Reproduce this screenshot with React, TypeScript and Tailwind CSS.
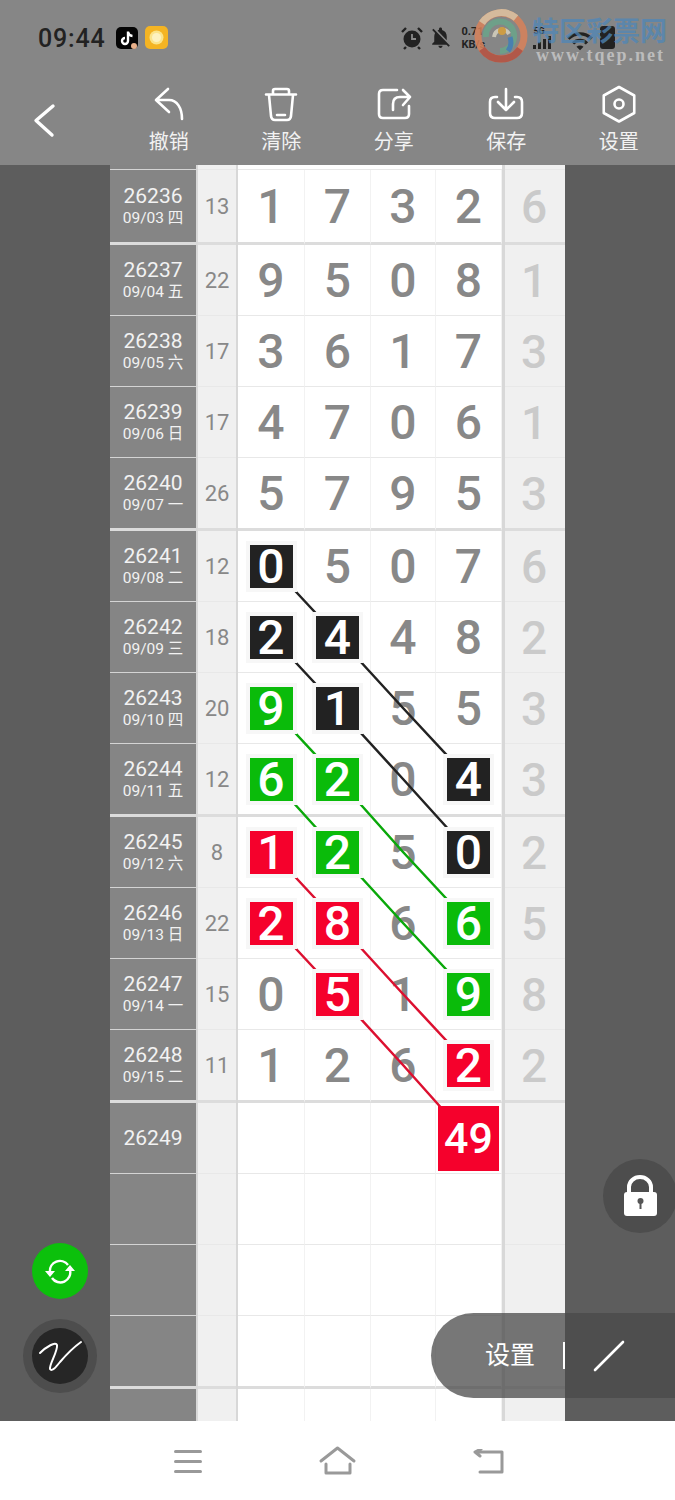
import { MdNotificationsOff, MdWifi } from "react-icons/md";

type Row = { no: string; date: string; sum: string; nums: string; last: string; marks: string; end?: boolean; tall?: boolean };

const rows: Row[] = [
  { no: "26236", date: "09/03 四", sum: "13", nums: "1732", last: "6", marks: "....", end: true, tall: true },
  { no: "26237", date: "09/04 五", sum: "22", nums: "9508", last: "1", marks: "...." },
  { no: "26238", date: "09/05 六", sum: "17", nums: "3617", last: "3", marks: "...." },
  { no: "26239", date: "09/06 日", sum: "17", nums: "4706", last: "1", marks: "...." },
  { no: "26240", date: "09/07 一", sum: "26", nums: "5795", last: "3", marks: "....", end: true },
  { no: "26241", date: "09/08 二", sum: "12", nums: "0507", last: "6", marks: "k..." },
  { no: "26242", date: "09/09 三", sum: "18", nums: "2448", last: "2", marks: "kk.." },
  { no: "26243", date: "09/10 四", sum: "20", nums: "9155", last: "3", marks: "gk.." },
  { no: "26244", date: "09/11 五", sum: "12", nums: "6204", last: "3", marks: "gg.k", end: true },
  { no: "26245", date: "09/12 六", sum: "8", nums: "1250", last: "2", marks: "rg.k" },
  { no: "26246", date: "09/13 日", sum: "22", nums: "2866", last: "5", marks: "rr.g" },
  { no: "26247", date: "09/14 一", sum: "15", nums: "0519", last: "8", marks: ".r.g" },
  { no: "26248", date: "09/15 二", sum: "11", nums: "1262", last: "2", marks: "...r", end: true },
];

const cellWidths = ["w-[67px]", "w-[66px]", "w-[65px]", "w-[66px]"];
const boxColors: Record<string, string> = {
  k: "bg-[#222222]",
  g: "bg-[#0abb0a]",
  r: "bg-[#f5012c]",
};

function rowBorder(end?: boolean) {
  return end ? "border-b-[3px] border-[#dcdcdc]" : "border-b border-[#e8e8e8]";
}

function rowHeight(end?: boolean, tall?: boolean) {
  if (tall) return "h-[75px]";
  return end ? "h-[73px]" : "h-[71px]";
}

function TableRow({ row }: { row: Row }) {
  const leftBorder = row.end ? "border-b-[3px] border-[#dcdcdc]" : "border-b border-[#d4d4d4]";
  return (
    <div className={`flex bg-[#d8d8d8] ${rowHeight(row.end, row.tall)}`}>
      <div className={`w-[86px] pt-[1px] bg-[#858585] text-[#f2f2f2] flex flex-col items-center justify-center ${leftBorder}`}>
        <div className="text-[21px] leading-[24px]">{row.no}</div>
        <div className="text-[15.5px] leading-[21px]">{row.date}</div>
      </div>
      <div className={`ml-[2px] w-[38px] bg-[#f0f0f0] text-[#888888] text-[22px] flex items-center justify-center ${rowBorder(row.end)}`}>
        {row.sum}
      </div>
      <div className="ml-[2px] flex">
        {row.nums.split("").map((d, i) => {
          const mark = row.marks[i];
          return (
            <div key={i} className={`${cellWidths[i]} bg-white border-r border-r-[#f2f2f2] flex items-center justify-center text-[48px] font-medium text-[#888888] ${mark === "." ? "pt-[2px]" : ""} ${rowBorder(row.end)}`}>
              {mark !== "." ? (
                <div className={`relative z-[2] size-[43px] pt-[2px] flex items-center justify-center text-white outline-[4px] outline-[#f7f7f7] ${boxColors[mark]}`}>
                  {d}
                </div>
              ) : (
                d
              )}
            </div>
          );
        })}
      </div>
      <div className={`ml-[3px] w-[60px] pr-[2px] pt-[2px] bg-[#f0f0f0] text-[#cacaca] text-[46px] font-medium flex items-center justify-center ${rowBorder(row.end)}`}>
        {row.last}
      </div>
    </div>
  );
}

function BlankRow({ no, end, children }: { no?: string; end?: boolean; children?: React.ReactNode }) {
  const leftBorder = end ? "border-b-[3px] border-[#dcdcdc]" : "border-b border-[#d4d4d4]";
  return (
    <div className={`flex bg-[#d8d8d8] ${rowHeight(end)}`}>
      <div className={`w-[86px] pt-[2px] bg-[#858585] text-[#f2f2f2] text-[21px] flex items-center justify-center ${leftBorder}`}>{no}</div>
      <div className={`ml-[2px] w-[38px] bg-[#f0f0f0] ${rowBorder(end)}`} />
      <div className="ml-[2px] flex">
        {cellWidths.map((w, i) => (
          <div key={i} className={`${w} bg-white border-r border-r-[#f2f2f2] flex items-center justify-center ${rowBorder(end)}`}>
            {i === 3 ? children : null}
          </div>
        ))}
      </div>
      <div className={`ml-[3px] w-[60px] bg-[#f0f0f0] ${rowBorder(end)}`} />
    </div>
  );
}

function ToolItem({ label, children }: { label: string; children: React.ReactNode }) {
  return (
    <div className="flex-1 flex flex-col items-center">
      {children}
      <div className="text-[20px] leading-[28px] text-[#f2f2f2] mt-[5px]">{label}</div>
    </div>
  );
}

const icon = { fill: "none", stroke: "#ffffff", strokeWidth: 2.6, strokeLinecap: "round" as const, strokeLinejoin: "round" as const };

function Header() {
  return (
    <header className="relative h-[165px] shrink-0 bg-[#868686]">
      {/* status bar */}
      <div className="h-[75px] flex items-center">
        <span className="ml-[38px] mt-[2px] text-[25px] font-medium text-[#222222] tracking-[0.8px]">09:44</span>
        <svg className="ml-[11px]" width="22" height="22" viewBox="0 0 22 22">
          <rect width="22" height="22" rx="5" fill="#050505" />
          <path d="M12 4.500v9.500a3 3 0 1 1-3-3M12 5c.5 2.500 2 3.800 4.500 4" fill="none" stroke="#ffffff" strokeWidth="2.400" />
          <circle cx="18" cy="19" r="3" fill="#e8b08a" />
        </svg>
        <svg className="ml-[7px]" width="23" height="23" viewBox="0 0 23 23">
          <rect width="23" height="23" rx="5" fill="#f4b423" />
          <circle cx="11.500" cy="11.500" r="7" fill="#fbe48a" />
          <circle cx="11.500" cy="11.500" r="4.500" fill="#fdf2c0" />
        </svg>
        <svg className="ml-[232px]" width="24" height="24" viewBox="0 0 24 24">
          <circle cx="12" cy="13" r="8.500" fill="#222222" />
          <path d="M12 8v5h4" fill="none" stroke="#8a8a8a" strokeWidth="1.800" />
          <path d="M2 6l4-4M22 6l-4-4M6 21l-2 2M18 21l2 2" stroke="#222222" strokeWidth="2.400" />
        </svg>
        <MdNotificationsOff className="ml-[4px] text-[#222222]" size={25} />
        <div className="ml-[8px] w-[27px] text-[11px] leading-[13px] font-bold text-[#222222]">
          0.71
          <br />
          KB/s
        </div>
        <div className="ml-[45px] w-[24px] flex flex-col">
          <span className="text-[9px] leading-[9px] font-bold text-[#222222]">5G</span>
          <div className="flex items-end gap-[2px] h-[13px]">
            <div className="w-[3px] h-[4px] bg-[#222222]" />
            <div className="w-[3px] h-[7px] bg-[#222222]" />
            <div className="w-[3px] h-[10px] bg-[#222222]" />
            <div className="w-[3px] h-[13px] bg-[#222222]" />
          </div>
        </div>
        <MdWifi className="ml-[9px] text-[#222222] mt-[6px]" size={28} />
        <div className="ml-[6px] w-[15px] h-[23px] rounded-[3px] bg-[#222222]" />
      </div>

      {/* watermark over the status bar */}
      <svg className="absolute left-[474px] top-[9px] opacity-85" width="54" height="54" viewBox="0 0 54 54">
        <circle cx="27" cy="27" r="23" fill="none" stroke="#d9825a" strokeWidth="7" />
        <path d="M8 14A23 23 0 0 1 42 9" fill="none" stroke="#e3c4a0" strokeWidth="7" />
        <path d="M8 40A23 23 0 0 0 46 40" fill="none" stroke="#b9503f" strokeWidth="7" />
        <path d="M12 28a14 14 0 0 1 28-3c1 9-6 17-14 17" fill="none" stroke="#6aa58a" strokeWidth="6" />
        <path d="M20 28a8 8 0 0 1 15-3" fill="none" stroke="#d7d2c0" strokeWidth="4" />
        <path d="M36 28c2 6 1 10-2 14" fill="none" stroke="#3f7fb8" strokeWidth="5" />
        <circle cx="28" cy="22" r="4" fill="#d9a13a" />
      </svg>
      <div className="absolute left-[532px] top-[14px] text-[27px] leading-[36px] text-[#4f86b8] opacity-75 font-bold">特区彩票网</div>
      <div className="absolute left-[536px] top-[45px] font-['Liberation_Serif',serif] text-[18px] leading-[20px] tracking-[2px] font-bold text-[#bcbcbc]">www.tqep.net</div>

      {/* toolbar */}
      <div className="h-[90px] flex pt-[10px]">
        <div className="w-[112.5px]">
          <svg className="ml-[32px] mt-[17px]" width="26" height="36" viewBox="32 102 26 36">
            <path d="M53 106L36 120.500L52 135" {...icon} strokeWidth={3.4} />
          </svg>
        </div>
        <ToolItem label="撤销">
          <svg width="36" height="38" viewBox="150 85 36 38">
            <path d="M167 89L155 100L168 112M156 100H168C176 100 181 108 181 119" {...icon} />
          </svg>
        </ToolItem>
        <ToolItem label="清除">
          <svg width="36" height="38" viewBox="263 85 36 38">
            <path d="M266 94.500H296M273 94V91Q273 89 275 89H287Q289 89 289 91V94M269 95L271 116Q271.500 120 275 120H287Q290.500 120 291 116L293 95M277 115H285" {...icon} />
          </svg>
        </ToolItem>
        <ToolItem label="分享">
          <svg width="36" height="38" viewBox="376 85 36 38">
            <path d="M397 90H383Q379 90 379 94V114Q379 118 383 118H405Q409 118 409 114V106M393 110V104Q393 97 400 97H410M403 90L410 97L403 105" {...icon} />
          </svg>
        </ToolItem>
        <ToolItem label="保存">
          <svg width="36" height="38" viewBox="488 85 36 38">
            <path d="M497 97H495Q490 97 490 102V113Q490 118 495 118H517Q522 118 522 113V102Q522 97 517 97H515M506 89V110M498 102L506 110L514 102" {...icon} />
          </svg>
        </ToolItem>
        <ToolItem label="设置">
          <svg width="36" height="38" viewBox="600.250 85 36 38">
            <path d="M618.250 87L633.500 95.500V113L618.250 121.500L603 113V95.500Z" {...icon} />
            <circle cx="618.250" cy="104" r="4.500" {...icon} />
          </svg>
        </ToolItem>
      </div>
    </header>
  );
}

function Table() {
  return (
    <div className="relative w-[455px] overflow-hidden">
      <div className="flex bg-[#d8d8d8] h-[5px]">
        <div className="w-[86px] bg-[#858585] border-b border-[#d4d4d4]" />
        <div className="ml-[2px] w-[38px] bg-[#f0f0f0] border-b border-[#e8e8e8]" />
        <div className="ml-[2px] w-[264px] bg-white border-b border-[#e8e8e8]" />
        <div className="ml-[3px] w-[60px] bg-[#f0f0f0] border-b border-[#e8e8e8]" />
      </div>
      {rows.map((r) => (
        <TableRow key={r.no} row={r} />
      ))}
      <BlankRow no="26249">
        <div className="relative z-[2] w-[61px] h-[65px] bg-[#f5012c] text-white text-[43px] font-medium flex items-center justify-center">49</div>
      </BlankRow>
      <BlankRow />
      <BlankRow />
      <BlankRow end />
      <BlankRow />

      {/* trend lines between the picked numbers */}
      <svg className="absolute left-0 top-0 z-[1]" width="455" height="1256" viewBox="110 165 455 1256" fill="none" strokeWidth="2.500">
        <path d="M272 566L338 637L403 708L469 779" stroke="#222222" />
        <path d="M272 637L338 708L403 779L469 852" stroke="#222222" />
        <path d="M272 708L338 779L403 852L469 923" stroke="#0aa80a" />
        <path d="M272 779L338 852L403 923L469 994" stroke="#0aa80a" />
        <path d="M272 852L338 923L403 994L469 1065" stroke="#dc1030" />
        <path d="M272 923L338 994L403 1065L469 1139" stroke="#dc1030" />
      </svg>
    </div>
  );
}

function BottomNav() {
  return (
    <nav className="h-[79px] shrink-0 bg-white flex">
      <div className="ml-[174px] mt-[29px] w-[28px] flex flex-col gap-[7px]">
        <div className="h-[3px] rounded-full bg-[#999999]" />
        <div className="h-[3px] rounded-full bg-[#999999]" />
        <div className="h-[3px] rounded-full bg-[#999999]" />
      </div>
      <svg className="ml-[116px] mt-[25px]" width="40" height="30" viewBox="318 1446 40 30" fill="none" stroke="#999999" strokeWidth="3" strokeLinecap="round" strokeLinejoin="round">
        <path d="M321 1461L337.500 1448L354 1461M326 1464V1473H350V1464" />
      </svg>
      <svg className="ml-[113px] mt-[28px]" width="36" height="30" viewBox="470 1449 36 30" fill="none" stroke="#999999" strokeWidth="3" strokeLinecap="round" strokeLinejoin="round">
        <path d="M474 1452H501V1472H479M480 1449L474 1452L479 1456" />
      </svg>
    </nav>
  );
}

export default function App() {
  return (
    <div className="relative w-[675px] h-[1500px] overflow-hidden flex flex-col bg-[#5d5d5d] font-['Roboto','Noto_Sans_CJK_SC',sans-serif]">
      <Header />
      <main className="flex h-[1256px] shrink-0">
        <div className="w-[110px] bg-[#5d5d5d]" />
        <Table />
        <div className="w-[110px] bg-[#5d5d5d]" />
      </main>
      <BottomNav />

      {/* floating controls */}
      <div className="absolute left-[32px] top-[1243px] z-10 size-[56px] rounded-full bg-[#0cc00c] flex items-center justify-center">
        <svg width="36" height="36" viewBox="42 1253 36 36" fill="none" stroke="#ffffff" strokeWidth="2.400">
          <path d="M50 1272A10 10 0 0 1 68 1265M70 1270A10 10 0 0 1 52 1278" />
          <path d="M45 1271H55L50 1277ZM75 1271H65L70 1265Z" fill="#ffffff" stroke="none" />
        </svg>
      </div>
      <div className="absolute left-[23px] top-[1319px] z-10 size-[74px] rounded-full bg-[#4d4d4d] flex items-center justify-center">
        <div className="size-[56px] rounded-full bg-[#262626] flex items-center justify-center">
          <svg width="56" height="56" viewBox="32 1328 56 56" fill="none" stroke="#ffffff" strokeWidth="2" strokeLinecap="round" strokeLinejoin="round">
            <path d="M40 1353C46 1347 56 1341 57 1345C58 1351 49 1365 50 1369C52 1372 56 1367 60 1362C66 1355 74 1347 81 1342" />
          </svg>
        </div>
      </div>
      <div className="absolute left-[603px] top-[1159px] z-10 size-[74px] rounded-full bg-[#4d4d4d] flex items-center justify-center">
        <svg width="36" height="44" viewBox="621 1174 36 44">
          <path d="M628 1193V1187A11 10 0 0 1 650 1187V1193" fill="none" stroke="#ffffff" strokeWidth="4" />
          <rect x="623" y="1192" width="33" height="24" rx="3" fill="#ffffff" />
          <circle cx="639.500" cy="1201" r="3" fill="#555555" />
          <rect x="638.500" y="1202" width="2" height="7" fill="#555555" />
        </svg>
      </div>
      <div className="absolute left-[431px] top-[1313px] z-10 w-[244px] h-[85px] rounded-l-[43px] bg-[#494949]/75 flex items-center">
        <span className="ml-[54px] text-[25px] leading-[30px] text-white">设置</span>
        <div className="ml-[28px] w-[2px] h-[27px] bg-white" />
        <svg className="ml-[28px]" width="32" height="32" viewBox="0 0 32 32">
          <path d="M2 30L30 2" stroke="#ffffff" strokeWidth="2.600" strokeLinecap="round" />
        </svg>
      </div>
    </div>
  );
}
